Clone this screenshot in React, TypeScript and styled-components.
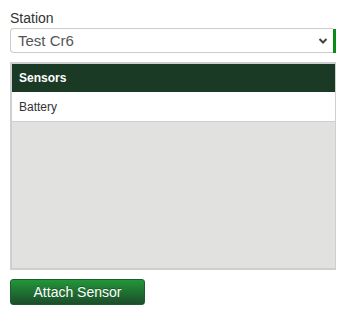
import React from 'react';
import styled, { createGlobalStyle } from 'styled-components';

const GlobalStyle = createGlobalStyle`
  body {
    margin: 0;
    background: #fff;
    font-family: "Liberation Sans", Arial, sans-serif;
  }
`;

const sensors = ['Battery'];

const App = () => {
  return (
    <>
      <GlobalStyle />
      <Page>
        <Label>Station</Label>
        <SelectWrap>
          <Select>
            <span>Test Cr6</span>
            <Chevron viewBox="0 0 10 8" width="10" height="8">
              <path d="M1.5 2 L5 5.5 L8.5 2" fill="none" stroke="#444" strokeWidth="2" />
            </Chevron>
          </Select>
          <Accent />
        </SelectWrap>
        <Panel>
          <Header>Sensors</Header>
          {sensors.map((name) => (
            <Row key={name}>{name}</Row>
          ))}
        </Panel>
        <Button type="button">Attach Sensor</Button>
      </Page>
    </>
  );
};

export default App;

const Page = styled.div`
  padding: 10px 8px 0 10px;
  display: flex;
  flex-direction: column;
  align-items: flex-start;
`;

const Label = styled.div`
  font-size: 14px;
  line-height: 16px;
  color: #333;
  margin-bottom: 2px;
`;

const SelectWrap = styled.div`
  display: flex;
  width: 326px;
  height: 25px;
`;

const Select = styled.div`
  flex: 1;
  display: flex;
  align-items: center;
  justify-content: space-between;
  box-sizing: border-box;
  border: 1px solid #ccc;
  border-radius: 4px 0 0 4px;
  border-right: none;
  padding: 0 5px 0 7px;
  font-size: 15px;
  color: #555;
`;

const Chevron = styled.svg`
  display: block;
`;

const Accent = styled.div`
  width: 3px;
  margin: 1px 0 0;
  background: #0a8a17;
`;

const Panel = styled.div`
  margin-top: 9px;
  width: 326px;
  height: 208px;
  box-sizing: border-box;
  border: 2px solid #cfcfcf;
  border-right-width: 1px;
  background: #e1e1e0;
`;

const Header = styled.div`
  height: 28px;
  display: flex;
  align-items: center;
  padding-left: 7px;
  background: #1b3a25;
  color: #fff;
  font-size: 12px;
  font-weight: bold;
`;

const Row = styled.div`
  height: 29px;
  display: flex;
  align-items: center;
  padding-left: 7px;
  background: #fff;
  border-bottom: 1px solid #cfcfcf;
  font-size: 12px;
  color: #333;
`;

const Button = styled.button`
  margin-top: 9px;
  width: 135px;
  height: 26px;
  border: 1px solid #1c5e2c;
  border-radius: 3px;
  background: linear-gradient(to bottom, #22963a, #1c4d2a);
  color: #fff;
  font-family: "Liberation Sans", Arial, sans-serif;
  font-size: 14px;
  text-shadow: 0 -1px 0 rgba(0, 0, 0, 0.25);
  padding: 0;
  cursor: pointer;
`;
